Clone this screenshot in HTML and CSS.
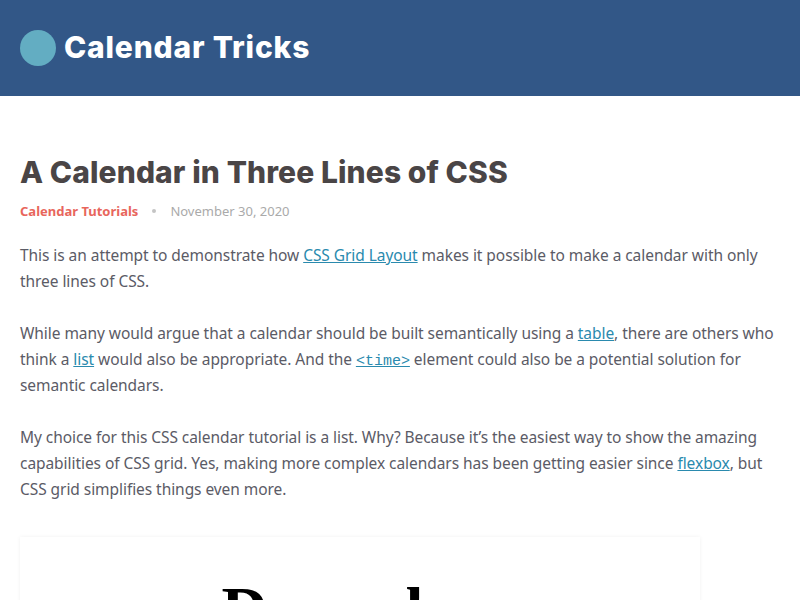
FILE: index.html
```html
<!DOCTYPE html>
<html lang="en">
<head>
<meta charset="utf-8">
<title>A Calendar in Three Lines of CSS</title>
<link rel="stylesheet" href="styles.css">
</head>
<body>
<header class="site-header">
  <div class="brand">
    <span class="brand-logo"></span>
    <span class="brand-name">Calendar Tricks</span>
  </div>
</header>
<main class="content">
  <h1 class="post-title">A Calendar in Three Lines of CSS</h1>
  <div class="post-meta">
    <a class="post-cat" href="#">Calendar Tutorials</a>
    <span class="meta-dot"></span>
    <span class="post-date">November 30, 2020</span>
  </div>
  <p>This is an attempt to demonstrate how <a href="#">CSS Grid Layout</a> makes it possible to make a calendar with only three lines of CSS.</p>
  <p>While many would argue that a calendar should be built semantically using a <a href="#">table</a>, there are others who think a <a href="#">list</a> would also be appropriate. And the <a href="#"><code>&lt;time&gt;</code></a> element could also be a potential solution for semantic calendars.</p>
  <p>My choice for this CSS calendar tutorial is a list. Why? Because it’s the easiest way to show the amazing capabilities of CSS grid. Yes, making more complex calendars has been getting easier since <a href="#">flexbox</a>, but CSS grid simplifies things even more.</p>
  <div class="demo">
    <h2 class="demo-month">December</h2>
  </div>
</main>
</body>
</html>
```
FILE: styles.css
```css
html, body {
  margin: 0;
  padding: 0;
  background: #fff;
}
body {
  font-family: "Noto Sans", "DejaVu Sans", sans-serif;
  color: #5b5b66;
  font-size: 15.5px;
  letter-spacing: -0.06px;
}
.site-header {
  background: #325787;
  height: 96px;
  display: flex;
  align-items: center;
  padding: 0 20px;
}
.brand {
  display: flex;
  align-items: center;
  gap: 8px;
}
.brand-logo {
  width: 36px;
  height: 36px;
  border-radius: 50%;
  background: #63adc2;
}
.brand-name {
  color: #fff;
  font-family: "Inter", sans-serif;
  font-weight: 800;
  font-size: 30px;
  letter-spacing: 0.8px;
  margin-top: -3px;
}
.content {
  max-width: 760px;
  padding: 0 20px;
}
.post-title {
  font-family: "Inter", sans-serif;
  font-weight: 800;
  font-size: 30px;
  letter-spacing: 0.1px;
  color: #4a4546;
  margin: 58px 0 12px;
  line-height: 1.2;
}
.post-meta {
  display: flex;
  align-items: center;
  gap: 14px;
  font-size: 13px;
  letter-spacing: 0;
  margin-bottom: 22px;
}
.post-cat {
  color: #e8665c;
  font-weight: bold;
  text-decoration: none;
}
.meta-dot {
  width: 4px;
  height: 4px;
  border-radius: 50%;
  background: #c4c4c4;
}
.post-date {
  color: #aaa;
}
p {
  line-height: 26px;
  margin: 0 0 26px;
}
a {
  color: #2a8aae;
}
code {
  font-family: "Liberation Mono", monospace;
  font-size: 15px;
  line-height: 1;
  letter-spacing: 0;
}
.demo {
  margin-top: 35px;
  width: 680px;
  background: #fff;
  box-shadow: 0 0 4px rgba(0, 0, 0, 0.06);
  padding-top: 36px;
  text-align: center;
}
.demo-month {
  margin: 0;
  font-family: "Liberation Serif", serif;
  font-size: 64px;
  font-weight: bold;
  letter-spacing: 0;
  color: #000;
}
```
